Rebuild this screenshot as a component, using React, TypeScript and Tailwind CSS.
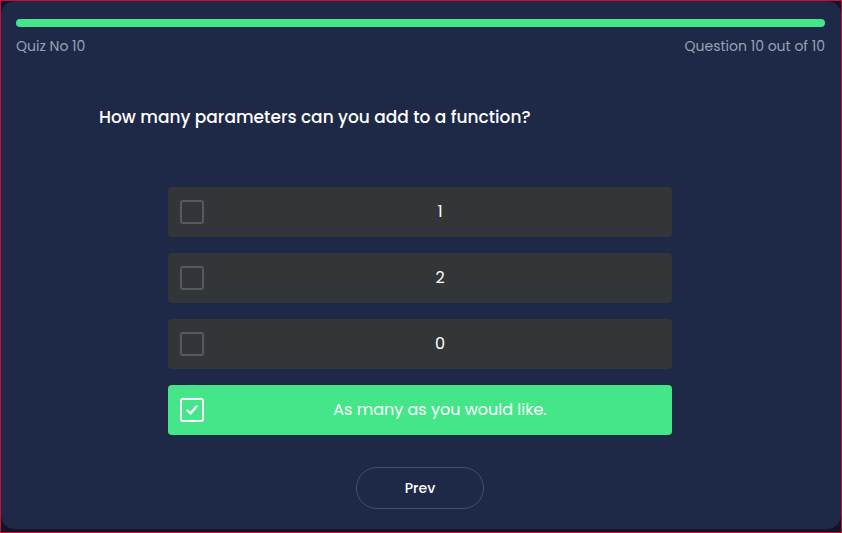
import React from "react";

const options = ["1", "2", "0", "As many as you would like."];

export default function App() {
  const selected = 3;
  return (
    <div
      className="w-[842px] h-[533px] border border-[#c8102e] bg-[#10152a] pb-[3px]"
      style={{ fontFamily: "Poppins, Inter, 'Open Sans', sans-serif" }}
    >
      <div className="h-full w-full rounded-[14px] bg-[#1e2947] flex flex-col pl-[15px] pr-[16px] pt-[18px]">
        <div className="h-[8px] w-full rounded-full bg-[#45e68a]" />
        <div className="mt-[10px] flex justify-between text-[14px] text-[#9aa1b5] leading-[18px]">
          <span>Quiz No 10</span>
          <span>Question 10 out of 10</span>
        </div>
        <div className="mt-[50px] pl-[83px] text-[17px] font-medium text-white leading-[24px]">
          How many parameters can you add to a function?
        </div>
        <div className="mt-[58px] ml-[152px] flex flex-col gap-[16px]">
          {options.map((o, i) => {
            const on = i === selected;
            return (
              <div
                key={o}
                className={`flex h-[50px] w-[504px] items-center rounded-[4px] pl-[12px] ${
                  on ? "bg-[#45e68a]" : "bg-[#333638]"
                }`}
              >
                <div
                  className={`flex h-[24px] w-[24px] shrink-0 items-center justify-center rounded-[3px] border-2 ${
                    on ? "border-white" : "border-[#56595d]"
                  }`}
                >
                  {on && (
                    <svg width="14" height="14" viewBox="0 0 14 14" fill="none">
                      <path d="M2.5 7.5 L5.5 10.5 L11.5 3.5" stroke="white" strokeWidth="2.4" strokeLinecap="round" strokeLinejoin="round" />
                    </svg>
                  )}
                </div>
                <span className="ml-[4px] flex-1 text-center text-[16px] text-white">{o}</span>
              </div>
            );
          })}
        </div>
        <div className="mt-[32px] ml-[340px] flex">
          <button className="h-[42px] w-[128px] rounded-full border border-[#474f68] text-[14px] font-medium text-white">
            Prev
          </button>
        </div>
      </div>
    </div>
  );
}
